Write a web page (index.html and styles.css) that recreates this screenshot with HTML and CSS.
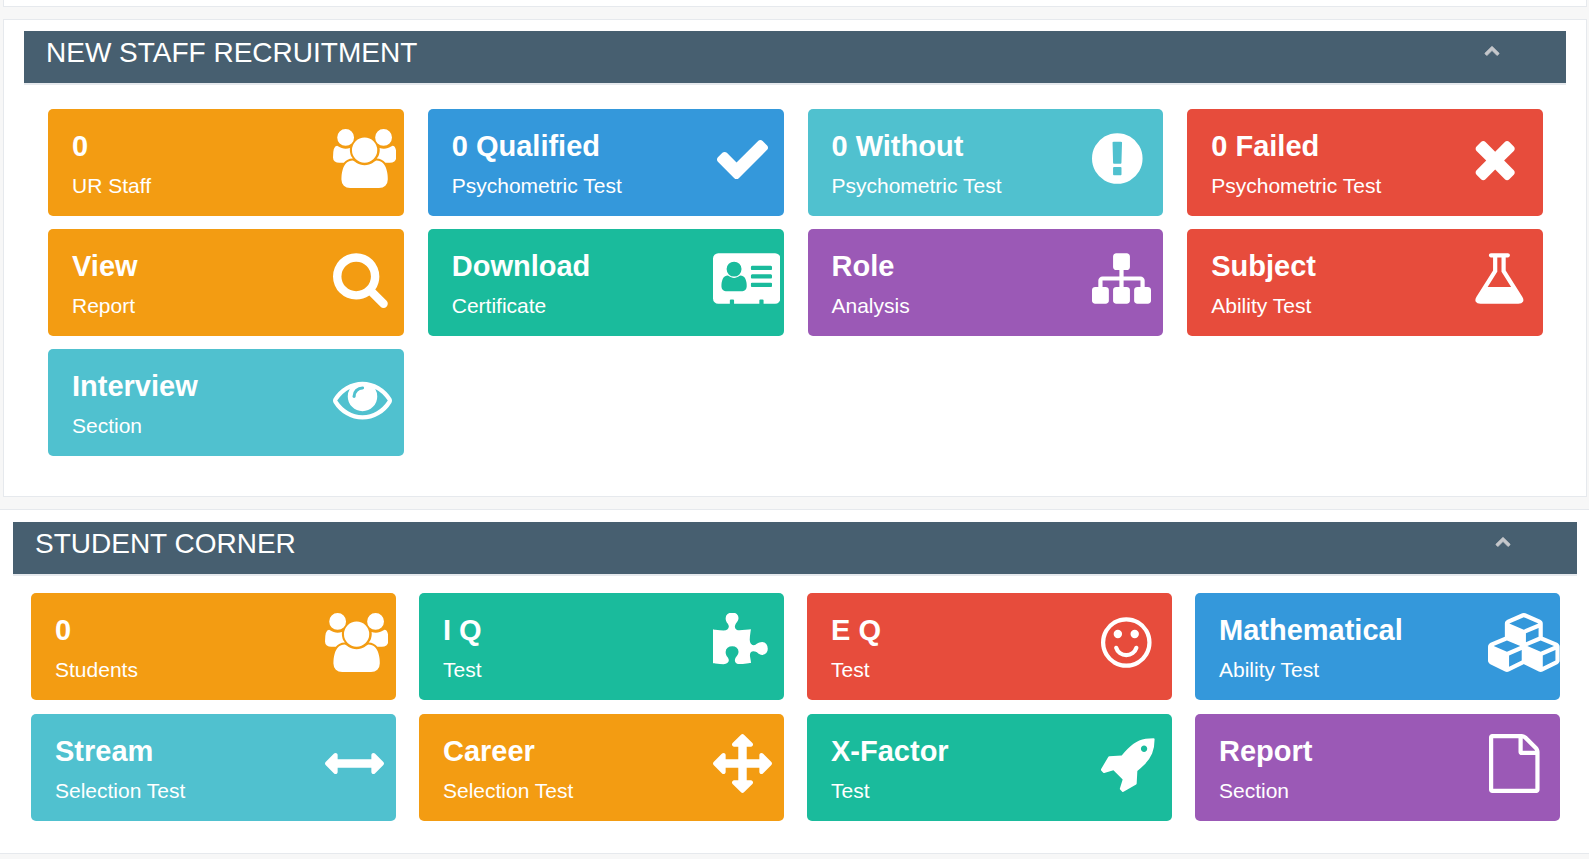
FILE: index.html
```
<!DOCTYPE html>
<html lang="en">
<head>
    <meta charset="UTF-8">
    <meta name="viewport" content="width=device-width, initial-scale=1.0">
    <title>Dashboard</title>
    <link rel="stylesheet" href="styles.css">
</head>
<body>
    <div class="panel panel-previous"></div>

    <section class="panel staff-panel">
        <div class="panel-title">
            <h2>NEW STAFF RECRUITMENT</h2>
            <button class="collapse-button" type="button" aria-label="Collapse New Staff Recruitment">
                <svg viewBox="0 0 1792 1792"><path d="M1683 1331l-166 165q-19 19-45 19t-45-19l-531-531-531 531q-19 19-45 19t-45-19l-166-165q-19-19-19-45.5t19-45.5l742-741q19-19 45-19t45 19l742 741q19 19 19 45.5t-19 45.5z"/></svg>
            </button>
        </div>
        <div class="tiles">
            <a class="tile orange" href="#">
                <div class="tile-text">
                    <h3>0</h3>
                    <p>UR Staff</p>
                </div>
                <div class="tile-icon">
                    <svg viewBox="0 0 1920 1792"><path d="M593 896q-162 5-265 128h-134q-82 0-138-40.5t-56-118.5q0-353 124-353 6 0 43.5 21t97.5 42.5 119 21.5q67 0 133-23-5 37-5 66 0 159 93 256zm1071 637q0 120-73 189.5t-194 69.5h-874q-121 0-194-69.5t-73-189.5q0-53 3.5-103.5t14-109 26.5-108.5 43-97.5 62-81 85.5-53.5 111.5-20q10 0 43 21.5t73 48 107 48 135 21.5 135-21.5 107-48 73-48 43-21.5q61 0 111.5 20t85.5 53.5 62 81 43 97.5 26.5 108.5 14 109 3.5 103.5zm-1024-1277q0 106-75 181t-181 75-181-75-75-181 75-181 181-75 181 75 75 181zm704 384q0 159-112.5 271.5t-271.5 112.5-271.5-112.5-112.5-271.5 112.5-271.5 271.5-112.5 271.5 112.5 112.5 271.5zm576 225q0 78-56 118.5t-138 40.5h-134q-103-123-265-128 93-97 93-256 0-29-5-66 66 23 133 23 59 0 119-21.5t97.5-42.5 43.5-21q124 0 124 353zm-128-609q0 106-75 181t-181 75-181-75-75-181 75-181 181-75 181 75 75 181z"/></svg>
                </div>
            </a>
            <a class="tile blue" href="#">
                <div class="tile-text">
                    <h3>0 Qualified</h3>
                    <p>Psychometric Test</p>
                </div>
                <div class="tile-icon">
                    <svg viewBox="0 0 1792 1792"><path d="M1671 566q0 40-28 68l-724 724-136 136q-28 28-68 28t-68-28l-136-136-362-362q-28-28-28-68t28-68l136-136q28-28 68-28t68 28l294 295 656-657q28-28 68-28t68 28l136 136q28 28 28 68z"/></svg>
                </div>
            </a>
            <a class="tile aqua" href="#">
                <div class="tile-text">
                    <h3>0 Without</h3>
                    <p>Psychometric Test</p>
                </div>
                <div class="tile-icon">
                    <svg viewBox="128 0 1536 1792"><path d="M896 128q209 0 385.5 103t279.5 279.5 103 385.5-103 385.5-279.5 279.5-385.5 103-385.5-103-279.5-279.5-103-385.5 103-385.5 279.5-279.5 385.5-103zm128 1247v-190q0-14-9-23.5t-22-9.5h-192q-13 0-23 10t-10 23v190q0 13 10 23t23 10h192q13 0 22-9.5t9-23.5zm-2-344l18-621q0-12-10-18-10-8-24-8h-220q-14 0-24 8-10 6-10 18l17 621q0 10 10 17.5t24 7.5h185q14 0 23.5-7.5t10.5-17.5z"/></svg>
                </div>
            </a>
            <a class="tile red" href="#">
                <div class="tile-text">
                    <h3>0 Failed</h3>
                    <p>Psychometric Test</p>
                </div>
                <div class="tile-icon">
                    <svg viewBox="192 0 1408 1792"><path d="M1490 1322q0 40-28 68l-136 136q-28 28-68 28t-68-28l-294-294-294 294q-28 28-68 28t-68-28l-136-136q-28-28-28-68t28-68l294-294-294-294q-28-28-28-68t28-68l136-136q28-28 68-28t68 28l294 294 294-294q28-28 68-28t68 28l136 136q28 28 28 68t-28 68l-294 294 294 294q28 28 28 68z"/></svg>
                </div>
            </a>
            <a class="tile orange" href="#">
                <div class="tile-text">
                    <h3>View</h3>
                    <p>Report</p>
                </div>
                <div class="tile-icon">
                    <svg viewBox="64 0 1664 1792"><path d="M1216 832q0-185-131.5-316.5t-316.5-131.5-316.5 131.5-131.5 316.5 131.5 316.5 316.5 131.5 316.5-131.5 131.5-316.5zm512 832q0 52-38 90t-90 38q-54 0-90-38l-343-342q-179 124-399 124-143 0-273.5-55.5t-225-150-150-225-55.5-273.5 55.5-273.5 150-225 225-150 273.5-55.5 273.5 55.5 225 150 150 225 55.5 273.5q0 220-124 399l343 343q37 37 37 90z"/></svg>
                </div>
            </a>
            <a class="tile green" href="#">
                <div class="tile-text">
                    <h3>Download</h3>
                    <p>Certificate</p>
                </div>
                <div class="tile-icon">
                    <svg viewBox="0 0 2048 1792"><path d="M1024 1131q0-64-9-117.5t-29.5-103-60.5-78-97-28.5q-6 4-30 18t-37.5 21.5-35.5 17.5-43 14.5-42 4.5-42-4.5-43-14.5-35.5-17.5-37.5-21.5-30-18q-57 0-97 28.5t-60.5 78-29.5 103-9 117.5 37 106.5 91 42.5h512q54 0 91-42.5t37-106.5zm-157-520q0-94-66.5-160.5t-160.5-66.5-160.5 66.5-66.5 160.5 66.5 160.5 160.5 66.5 160.5-66.5 66.5-160.5zm925 509v-64q0-14-9-23t-23-9h-576q-14 0-23 9t-9 23v64q0 14 9 23t23 9h576q14 0 23-9t9-23zm0-260v-56q0-15-10.5-25.5t-25.5-10.5h-568q-15 0-25.5 10.5t-10.5 25.5v56q0 15 10.5 25.5t25.5 10.5h568q15 0 25.5-10.5t10.5-25.5zm0-252v-64q0-14-9-23t-23-9h-576q-14 0-23 9t-9 23v64q0 14 9 23t23 9h576q14 0 23-9t9-23zm256-320v1216q0 66-47 113t-113 47h-352v-96q0-14-9-23t-23-9h-64q-14 0-23 9t-9 23v96h-768v-96q0-14-9-23t-23-9h-64q-14 0-23 9t-9 23v96h-352q-66 0-113-47t-47-113v-1216q0-66 47-113t113-47h1728q66 0 113 47t47 113z"/></svg>
                </div>
            </a>
            <a class="tile purple" href="#">
                <div class="tile-text">
                    <h3>Role</h3>
                    <p>Analysis</p>
                </div>
                <div class="tile-icon">
                    <svg viewBox="0 0 1792 1792"><path d="M1792 1248v320q0 40-28 68t-68 28h-320q-40 0-68-28t-28-68v-320q0-40 28-68t68-28h96v-192h-512v192h96q40 0 68 28t28 68v320q0 40-28 68t-68 28h-320q-40 0-68-28t-28-68v-320q0-40 28-68t68-28h96v-192h-512v192h96q40 0 68 28t28 68v320q0 40-28 68t-68 28h-320q-40 0-68-28t-28-68v-320q0-40 28-68t68-28h96v-192q0-52 38-90t90-38h512v-192h-96q-40 0-68-28t-28-68v-320q0-40 28-68t68-28h320q40 0 68 28t28 68v320q0 40-28 68t-68 28h-96v192h512q52 0 90 38t38 90v192h96q40 0 68 28t28 68z"/></svg>
                </div>
            </a>
            <a class="tile red" href="#">
                <div class="tile-text">
                    <h3>Subject</h3>
                    <p>Ability Test</p>
                </div>
                <div class="tile-icon">
                    <svg viewBox="64 0 1664 1792"><path d="M1591 1448q56 89 21.5 152.5t-140.5 63.5h-1152q-106 0-140.5-63.5t21.5-152.5l503-793v-399h-64q-26 0-45-19t-19-45 19-45 45-19h512q26 0 45 19t19 45-19 45-45 19h-64v399zm-779-725l-272 429h712l-272-429-20-31v-436h-128v436z"/></svg>
                </div>
            </a>
            <a class="tile aqua" href="#">
                <div class="tile-text">
                    <h3>Interview</h3>
                    <p>Section</p>
                </div>
                <div class="tile-icon">
                    <svg viewBox="0 0 1792 1792"><path d="M1664 960q-152-236-381-353 61 104 61 225 0 185-131.5 316.5t-316.5 131.5-316.5-131.5-131.5-316.5q0-121 61-225-229 117-381 353 133 205 333.5 326.5t434.5 121.5 434.5-121.5 333.5-326.5zm-720-384q0-20-14-34t-34-14q-125 0-214.5 89.5t-89.5 214.5q0 20 14 34t34 14 34-14 14-34q0-86 61-147t147-61q20 0 34-14t14-34zm848 384q0 34-20 69-140 230-376.5 368.5t-499.5 138.5-499.5-139-376.5-368q-20-35-20-69t20-69q140-229 376.5-368t499.5-139 499.5 139 376.5 368q20 35 20 69z"/></svg>
                </div>
            </a>
        </div>
    </section>

    <section class="panel student-panel">
        <div class="panel-title">
            <h2>STUDENT CORNER</h2>
            <button class="collapse-button" type="button" aria-label="Collapse Student Corner">
                <svg viewBox="0 0 1792 1792"><path d="M1683 1331l-166 165q-19 19-45 19t-45-19l-531-531-531 531q-19 19-45 19t-45-19l-166-165q-19-19-19-45.5t19-45.5l742-741q19-19 45-19t45 19l742 741q19 19 19 45.5t-19 45.5z"/></svg>
            </button>
        </div>
        <div class="tiles">
            <a class="tile orange" href="#">
                <div class="tile-text">
                    <h3>0</h3>
                    <p>Students</p>
                </div>
                <div class="tile-icon">
                    <svg viewBox="0 0 1920 1792"><path d="M593 896q-162 5-265 128h-134q-82 0-138-40.5t-56-118.5q0-353 124-353 6 0 43.5 21t97.5 42.5 119 21.5q67 0 133-23-5 37-5 66 0 159 93 256zm1071 637q0 120-73 189.5t-194 69.5h-874q-121 0-194-69.5t-73-189.5q0-53 3.5-103.5t14-109 26.5-108.5 43-97.5 62-81 85.5-53.5 111.5-20q10 0 43 21.5t73 48 107 48 135 21.5 135-21.5 107-48 73-48 43-21.5q61 0 111.5 20t85.5 53.5 62 81 43 97.5 26.5 108.5 14 109 3.5 103.5zm-1024-1277q0 106-75 181t-181 75-181-75-75-181 75-181 181-75 181 75 75 181zm704 384q0 159-112.5 271.5t-271.5 112.5-271.5-112.5-112.5-271.5 112.5-271.5 271.5-112.5 271.5 112.5 112.5 271.5zm576 225q0 78-56 118.5t-138 40.5h-134q-103-123-265-128 93-97 93-256 0-29-5-66 66 23 133 23 59 0 119-21.5t97.5-42.5 43.5-21q124 0 124 353zm-128-609q0 106-75 181t-181 75-181-75-75-181 75-181 181-75 181 75 75 181z"/></svg>
                </div>
            </a>
            <a class="tile green" href="#">
                <div class="tile-text">
                    <h3>I Q</h3>
                    <p>Test</p>
                </div>
                <div class="tile-icon">
                    <svg viewBox="91 0 1664 1792"><path d="M1755 1083q0 81-44.5 135t-123.5 54q-41 0-77.5-17.5t-59-38-56.5-38-71-17.5q-110 0-110 124 0 39 16 115t15 115v5q-22 0-33 1-34 3-97.5 11.5t-115.5 13.5-98 5q-61 0-103-26.5t-42-83.5q0-37 17.5-71t38-56.5 38-59 17.5-77.5q0-79-54-123.5t-135-44.5q-84 0-143 45.5t-59 127.5q0 43 15 83t33.5 64.5 33.5 53 15 50.5q0 45-46 89-37 35-117 35-95 0-245-24-9-2-27.5-4t-27.5-4l-13-2q-1 0-3-1-2 0-2-1v-1024q2 1 17.5 3.5t34 5 21.5 3.5q150 24 245 24 80 0 117-35 46-44 46-89 0-22-15-50.5t-33.5-53-33.5-64.5-15-83q0-82 59-127.5t144-45.5q80 0 134 44.5t54 123.5q0 41-17.5 77.5t-38 59-38 56.5-17.5 71q0 57 42 83.5t103 26.5q64 0 180-15t163-17v2q-1 2-3.5 17.5t-5 34-3.5 21.5q-24 150-24 245 0 80 35 117 44 46 89 46 22 0 50.5-15t53-33.5 64.5-33.5 83-15q82 0 127.5 59t45.5 143z"/></svg>
                </div>
            </a>
            <a class="tile red" href="#">
                <div class="tile-text">
                    <h3>E Q</h3>
                    <p>Test</p>
                </div>
                <div class="tile-icon">
                    <svg viewBox="128 0 1536 1792"><path d="M1262 1075q-37 121-138 195t-228 74-228-74-138-195q-8-25 4-48.5t38-31.5q25-8 48.5 4t31.5 38q25 80 92.5 129.5t151.5 49.5 151.5-49.5 92.5-129.5q8-26 32-38t49-4 37 31.5 4 48.5zm-494-435q0 53-37.5 90.5t-90.5 37.5-90.5-37.5-37.5-90.5 37.5-90.5 90.5-37.5 90.5 37.5 37.5 90.5zm512 0q0 53-37.5 90.5t-90.5 37.5-90.5-37.5-37.5-90.5 37.5-90.5 90.5-37.5 90.5 37.5 37.5 90.5zm256 256q0-130-51-248.5t-136.5-204-204-136.5-248.5-51-248.5 51-204 136.5-136.5 204-51 248.5 51 248.5 136.5 204 204 136.5 248.5 51 248.5-51 204-136.5 136.5-204 51-248.5zm128 0q0 209-103 385.5t-279.5 279.5-385.5 103-385.5-103-279.5-279.5-103-385.5 103-385.5 279.5-279.5 385.5-103 385.5 103 279.5 279.5 103 385.5z"/></svg>
                </div>
            </a>
            <a class="tile blue" href="#">
                <div class="tile-text">
                    <h3>Mathematical</h3>
                    <p>Ability Test</p>
                </div>
                <div class="tile-icon">
                    <svg viewBox="0 0 2176 1792"><path d="M640 1632l384-192v-314l-384 164v342zm-64-454l404-173-404-173-404 173zm1088 454l384-192v-314l-384 164v342zm-64-454l404-173-404-173-404 173zm-448-293l384-165v-266l-384 164v267zm-64-379l441-189-441-189-441 189zm1088 518v416q0 36-19 67t-52 47l-448 224q-25 14-57 14t-57-14l-448-224q-4-2-7-4-2 2-7 4l-448 224q-25 14-57 14t-57-14l-448-224q-33-16-52-47t-19-67v-416q0-38 21.5-70t56.5-48l434-186v-400q0-38 21.5-70t56.5-48l448-192q23-10 50-10t50 10l448 192q35 16 56.5 48t21.5 70v400l434 186q36 16 57 48t21 70z"/></svg>
                </div>
            </a>
            <a class="tile aqua" href="#">
                <div class="tile-text">
                    <h3>Stream</h3>
                    <p>Selection Test</p>
                </div>
                <div class="tile-icon">
                    <svg viewBox="0 0 1792 1792"><path d="M1792 896q0 26-19 45l-256 256q-19 19-45 19t-45-19-19-45v-128h-1024v128q0 26-19 45t-45 19-45-19l-256-256q-19-19-19-45t19-45l256-256q19-19 45-19t45 19 19 45v128h1024v-128q0-26 19-45t45-19 45 19l256 256q19 19 19 45z"/></svg>
                </div>
            </a>
            <a class="tile orange" href="#">
                <div class="tile-text">
                    <h3>Career</h3>
                    <p>Selection Test</p>
                </div>
                <div class="tile-icon">
                    <svg viewBox="0 0 1792 1792"><path d="M1792 896q0 26-19 45l-256 256q-19 19-45 19t-45-19-19-45v-128h-384v384h128q26 0 45 19t19 45-19 45l-256 256q-19 19-45 19t-45-19l-256-256q-19-19-19-45t19-45 45-19h128v-384h-384v128q0 26-19 45t-45 19-45-19l-256-256q-19-19-19-45t19-45l256-256q19-19 45-19t45 19 19 45v128h384v-384h-128q-26 0-45-19t-19-45 19-45l256-256q19-19 45-19t45 19l256 256q19 19 19 45t-19 45-45 19h-128v384h384v-128q0-26 19-45t45-19 45 19l256 256q19 19 19 45z"/></svg>
                </div>
            </a>
            <a class="tile green" href="#">
                <div class="tile-text">
                    <h3>X-Factor</h3>
                    <p>Test</p>
                </div>
                <div class="tile-icon">
                    <svg viewBox="36 0 1664 1792"><path d="M1440 448q0-40-28-68t-68-28-68 28-28 68 28 68 68 28 68-28 28-68zm224-288q0 249-75.5 430.5t-253.5 360.5q-81 80-195 176l-20 379q-2 16-16 26l-384 224q-7 4-16 4-12 0-23-9l-64-64q-13-14-8-32l85-276-281-281-276 85q-3 1-9 1-14 0-23-9l-64-64q-17-19-5-39l224-384q10-14 26-16l379-20q96-114 176-195 188-187 358-258t431-71q14 0 24 9.5t10 22.5z"/></svg>
                </div>
            </a>
            <a class="tile purple" href="#">
                <div class="tile-text">
                    <h3>Report</h3>
                    <p>Section</p>
                </div>
                <div class="tile-icon">
                    <svg viewBox="128 0 1536 1792"><path d="M1596 380q28 28 48 76t20 88v1152q0 40-28 68t-68 28h-1344q-40 0-68-28t-28-68v-1600q0-40 28-68t68-28h896q40 0 88 20t76 48zm-444-244v376h376q-10-29-22-41l-313-313q-12-12-41-22zm384 1528v-1024h-416q-40 0-68-28t-28-68v-416h-768v1536h1280z"/></svg>
                </div>
            </a>
        </div>
    </section>
</body>
</html>
```

FILE: styles.css
```
* {
    box-sizing: border-box;
}
body {
    margin: 0;
    background: #f7f7f7;
    font-family: "Liberation Sans", Arial, sans-serif;
    color: #fff;
}
h2, h3, p {
    margin: 0;
}
.panel {
    background: #fff;
    border: 1px solid #e6e9ed;
    margin-bottom: 12px;
}
/* bottom edge of the panel above */
.panel-previous {
    border-top: none;
    padding-top: 6px;
    margin-left: 3px;
    margin-right: 2px;
}
.staff-panel {
    margin-left: 3px;
    margin-right: 2px;
    padding: 11px 20px 40px;
}
.student-panel {
    border-left: none;
    border-right: none;
    margin-bottom: 0;
    padding: 12px 12px 32px 13px;
}
.panel-title {
    display: flex;
    justify-content: space-between;
    align-items: flex-start;
    background: #475f70;
    border-bottom: 2px solid #e6e9ed;
    padding: 6px 66px 14px 22px;
}
.panel-title h2 {
    font-size: 28px;
    font-weight: normal;
    line-height: 32px;
}
.collapse-button {
    background: none;
    border: none;
    padding: 5px 0;
    cursor: pointer;
}
.collapse-button svg {
    display: block;
    width: 16px;
    height: 16px;
    fill: #c5c7cb;
    stroke: #c5c7cb;
    stroke-width: 60px;
}
.tiles {
    display: grid;
    grid-template-columns: repeat(4, 1fr);
    gap: 13px 24px;
    padding: 24px 23px 0 24px;
}
.student-panel .tiles {
    gap: 14px 23px;
    padding: 17px 17px 0 18px;
}
.tile {
    display: flex;
    justify-content: space-between;
    border-radius: 5px;
    color: #fff;
    text-decoration: none;
}
.tile-text {
    padding: 17px 0 18px 24px;
}
.tile-text h3 {
    font-size: 29px;
    font-weight: bold;
    line-height: 40px;
    margin-bottom: 8px;
}
.tile-text p {
    font-size: 21px;
    line-height: 24px;
}
.tile-icon {
    flex: 0 0 71px;
    padding-top: 20px;
}
.tile-icon svg {
    display: block;
    height: 59px;
    fill: #fff;
}
.orange {
    background: #f39c12;
}
.blue {
    background: #3498db;
}
.aqua {
    background: #50c1cf;
}
.red {
    background: #e74c3c;
}
.green {
    background: #1abb9c;
}
.purple {
    background: #9b59b6;
}
```
